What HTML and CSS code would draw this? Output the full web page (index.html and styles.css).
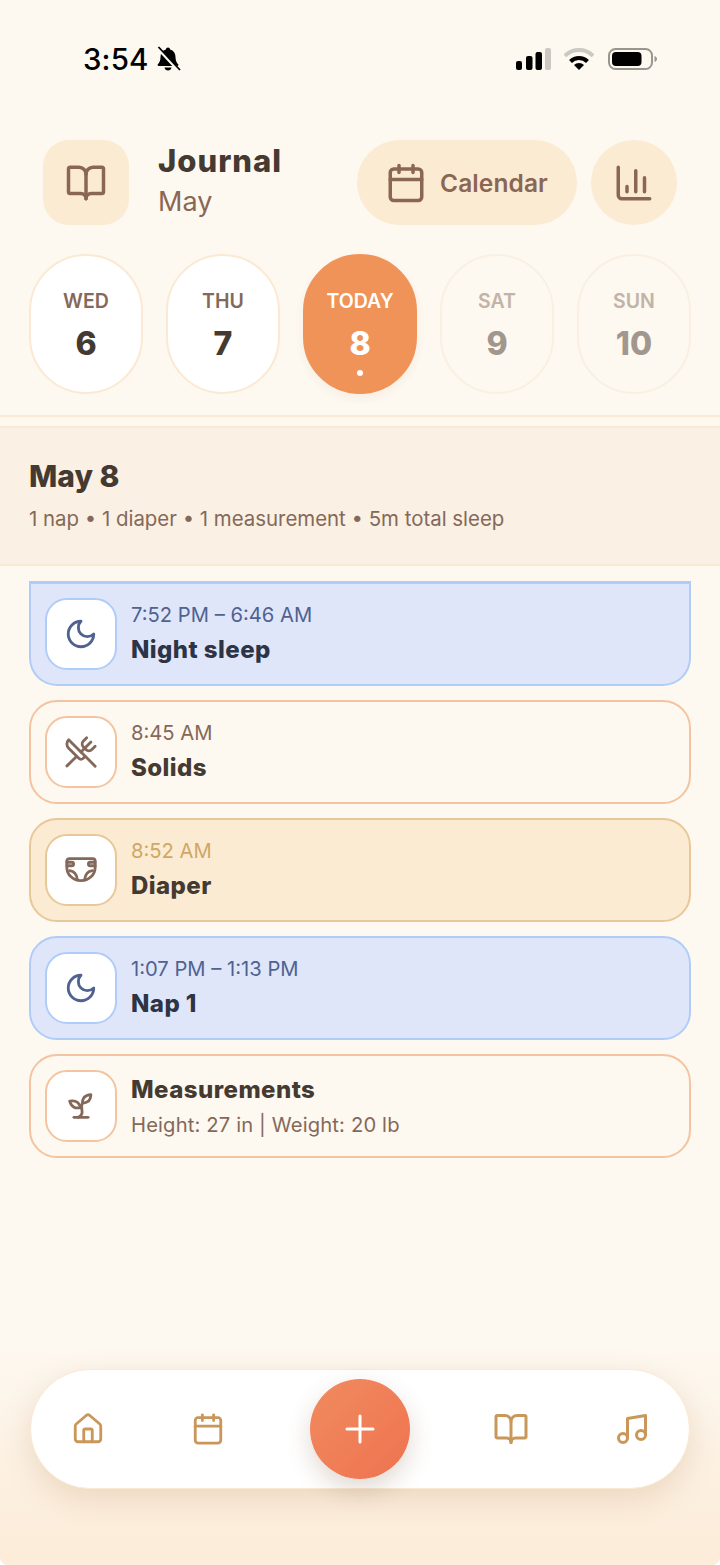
FILE: index.html
```html
<!DOCTYPE html>
<html lang="en">
<head>
<meta charset="utf-8">
<title>Journal</title>
<link rel="stylesheet" href="styles.css">
</head>
<body>
<div class="screen">
  <div class="status">
    <div class="status-left">
      <span class="clock">3:54</span>
      <svg class="bell" viewBox="0 0 26 26"><path d="M13 1.500c1.200 0 2 .9 2.100 1.900 3.600 1 5.400 4 5.400 7.600 0 3.500 1 5.500 2.700 7.300.5.700.1 1.700-.9 1.700H3.700c-1 0-1.400-1-.9-1.700 1.700-1.800 2.700-3.800 2.700-7.300 0-3.600 1.800-6.600 5.400-7.600.1-1 .9-1.900 2.100-1.900z"/><path d="M9.500 21.500h7c-.3 1.800-1.700 3-3.500 3s-3.200-1.200-3.500-3z"/><path class="bell-gap" d="M2 1.500 24 25"/><path class="bell-line" d="M3.500 1 25 24"/></svg>
    </div>
    <div class="status-right">
      <svg class="signal" viewBox="0 0 35 22"><rect x="0" y="13" width="6" height="9" rx="2"/><rect x="10" y="8" width="6.500" height="14" rx="2"/><rect x="19.500" y="4" width="6.500" height="18" rx="2"/><rect class="dim" x="29" y="0" width="6" height="22" rx="2"/></svg>
      <svg class="wifi" viewBox="0 0 30 22"><path class="arc arc-dim" d="M.9 7.900A20 20 0 0 1 29.100 7.900"/><path class="arc" d="M6.500 13.500A12 12 0 0 1 23.500 13.500"/><path d="M10 17A7 7 0 0 1 20 17L15 22z"/></svg>
      <svg class="battery" viewBox="0 0 49 22"><rect class="batt-shell" x="1" y="1" width="43" height="20" rx="6.500"/><rect x="4" y="4" width="29.500" height="14" rx="4"/><path class="batt-cap" d="M46.500 8c1.600.6 2.500 1.700 2.500 3s-.9 2.400-2.500 3z"/></svg>
    </div>
  </div>

  <header class="top">
    <div class="logo">
      <svg class="ico-42 brown" viewBox="0 0 24 24"><path d="M12 7v14"/><path d="M3 18a1 1 0 0 1-1-1V4a1 1 0 0 1 1-1h5a4 4 0 0 1 4 4 4 4 0 0 1 4-4h5a1 1 0 0 1 1 1v13a1 1 0 0 1-1 1h-6a3 3 0 0 0-3 3 3 3 0 0 0-3-3z"/></svg>
    </div>
    <div class="heading">
      <div class="heading-title">Journal</div>
      <div class="heading-sub">May</div>
    </div>
    <div class="cal-pill">
      <svg class="ico-42 brown" viewBox="0 0 24 24"><path d="M8 2v4M16 2v4"/><rect x="3" y="4" width="18" height="18" rx="2"/><path d="M3 10h18"/></svg>
      <span>Calendar</span>
    </div>
    <div class="stat-btn">
      <svg class="ico-42 brown" viewBox="0 0 24 24"><path d="M3 3v16a2 2 0 0 0 2 2h16"/><path d="M18 17V9M13 17V5M8 17v-3"/></svg>
    </div>
  </header>

  <nav class="days">
    <div class="day"><span class="day-name">WED</span><span class="day-num">6</span></div>
    <div class="day"><span class="day-name">THU</span><span class="day-num">7</span></div>
    <div class="day today"><span class="day-name">TODAY</span><span class="day-num">8</span><i class="dot"></i></div>
    <div class="day future"><span class="day-name">SAT</span><span class="day-num">9</span></div>
    <div class="day future"><span class="day-name">SUN</span><span class="day-num">10</span></div>
  </nav>

  <section class="summary">
    <h1>May 8</h1>
    <p>1 nap • 1 diaper • 1 measurement • 5m total sleep</p>
  </section>

  <main class="list">
    <article class="card sleep clipped">
      <div class="card-ico"><svg class="ico-34" viewBox="0 0 24 24"><path d="M12 3a6 6 0 0 0 9 9 9 9 0 1 1-9-9Z"/></svg></div>
      <div class="card-text"><div class="time">7:52 PM – 6:46 AM</div><div class="name">Night sleep</div></div>
    </article>
    <article class="card plain">
      <div class="card-ico"><svg class="ico-34" viewBox="0 0 24 24"><path d="m16 2-2.300 2.300a3 3 0 0 0 0 4.200l1.800 1.800a3 3 0 0 0 4.200 0L22 8"/><path d="M15 15 3.300 3.300a4.200 4.200 0 0 0 0 6l7.300 7.300c.7.700 2 .7 2.800 0L15 15Zm0 0 7 7"/><path d="m2.100 21.800 6.400-6.300"/><path d="m19 5-7 7"/></svg></div>
      <div class="card-text"><div class="time">8:45 AM</div><div class="name">Solids</div></div>
    </article>
    <article class="card diaper">
      <div class="card-ico"><svg class="ico-34" viewBox="0 0 24 24"><path d="M3.700 4h16.600A1.700 1.700 0 0 1 22 5.700V10c0 5.500-4.500 9.500-10 9.500S2 15.500 2 10V5.700A1.700 1.700 0 0 1 3.700 4z"/><path d="M2 6.500h3.500a1 1 0 0 1 0 2.500H2M22 6.500h-3.500a1 1 0 0 0 0 2.500H22M4 12.500c3 .3 5 2.500 5.500 6.500M20 12.500c-3 .3-5 2.500-5.500 6.500"/></svg></div>
      <div class="card-text"><div class="time">8:52 AM</div><div class="name">Diaper</div></div>
    </article>
    <article class="card sleep">
      <div class="card-ico"><svg class="ico-34" viewBox="0 0 24 24"><path d="M12 3a6 6 0 0 0 9 9 9 9 0 1 1-9-9Z"/></svg></div>
      <div class="card-text"><div class="time">1:07 PM – 1:13 PM</div><div class="name">Nap 1</div></div>
    </article>
    <article class="card plain">
      <div class="card-ico"><svg class="ico-34" viewBox="0 0 24 24"><path d="M7 20h10"/><path d="M10 20c5.500-2.500.8-6.400 3-10"/><path d="M9.500 9.400c1.100.8 1.800 2.200 2.300 3.700-2 .4-3.500.4-4.800-.3-1.200-.6-2.300-1.900-3-4.200 2.800-.5 4.400 0 5.500.8z"/><path d="M14.100 6a7 7 0 0 0-1.100 4c1.900-.1 3.300-.6 4.300-1.400 1-1 1.600-2.300 1.700-4.600-2.700.1-4 1-4.900 2z"/></svg></div>
      <div class="card-text measure"><div class="name first">Measurements</div><div class="time detail">Height: 27 in | Weight: 20 lb</div></div>
    </article>
  </main>

  <footer class="dock-wrap">
    <div class="dock">
      <svg class="ico-34 tan" viewBox="0 0 24 24"><path d="M15 21v-8a1 1 0 0 0-1-1h-4a1 1 0 0 0-1 1v8"/><path d="M3 10a2 2 0 0 1 .709-1.528l7-5.999a2 2 0 0 1 2.582 0l7 5.999A2 2 0 0 1 21 10v9a2 2 0 0 1-2 2H5a2 2 0 0 1-2-2z"/></svg>
      <svg class="ico-34 tan" viewBox="0 0 24 24"><path d="M8 2v4M16 2v4"/><rect x="3" y="4" width="18" height="18" rx="2"/><path d="M3 10h18"/></svg>
      <div class="fab"><svg class="plus" viewBox="0 0 32 32"><path d="M3 16h26M16 3v26"/></svg></div>
      <svg class="ico-36 tan" viewBox="0 0 24 24"><path d="M12 7v14"/><path d="M3 18a1 1 0 0 1-1-1V4a1 1 0 0 1 1-1h5a4 4 0 0 1 4 4 4 4 0 0 1 4-4h5a1 1 0 0 1 1 1v13a1 1 0 0 1-1 1h-6a3 3 0 0 0-3 3 3 3 0 0 0-3-3z"/></svg>
      <svg class="ico-36 tan" viewBox="0 0 24 24"><path d="M9 18V5l12-2v13"/><circle cx="6" cy="18" r="3"/><circle cx="18" cy="16" r="3"/></svg>
    </div>
  </footer>
</div>
</body>
</html>
```
FILE: styles.css
```css
* { box-sizing: border-box; }
html, body { margin: 0; padding: 0; background: #fff; }
body { font-family: "Inter", "Noto Sans", sans-serif; }
.screen {
  width: 720px; height: 1565px; display: flex; flex-direction: column;
  background: #fdf8f0; border-radius: 0 0 8px 8px; overflow: hidden;
}
svg { display: block; flex: none; }

.status { height: 140px; padding: 41px 63px 0 83px; display: flex; justify-content: space-between; align-items: flex-start; }
.status-left { display: flex; align-items: center; gap: 7px; height: 36px; }
.clock { font: 500 29.500px/36px "Inter", sans-serif; color: #000; letter-spacing: .1px; }
.bell { width: 26px; height: 26px; }
.bell path { fill: #000; }
.bell .bell-gap { fill: none; stroke: #fdf8f0; stroke-width: 3; }
.bell .bell-line { fill: none; stroke: #000; stroke-width: 1.800; }
.status-right { display: flex; align-items: center; gap: 13px; height: 36px; }
.signal { width: 35px; height: 22px; fill: #000; }
.wifi { width: 30px; height: 22px; fill: #000; }
.arc { fill: none; stroke: #000; stroke-width: 4; }
.arc-dim { stroke: #ccc8c2; }
.dim { fill: #ccc8c2; }
.battery { width: 49px; height: 22px; fill: #000; margin-left: 1px; }
.batt-shell { fill: none; stroke: #99958f; stroke-width: 2; }
.batt-cap { fill: #99958f; }

.ico-42, .ico-36, .ico-34 { fill: none; stroke-width: 2; stroke-linecap: round; stroke-linejoin: round; }
.ico-42 { width: 42px; height: 42px; }
.ico-36 { width: 36px; height: 36px; }
.ico-34 { width: 34px; height: 34px; }
.brown { stroke: #8a6753; }
.tan { stroke: #c99759; }

.top { height: 85px; margin: 0 43px; display: flex; align-items: center; }
.logo { width: 86px; height: 85px; border-radius: 26px; background: #fcebd3; display: flex; align-items: center; justify-content: center; }
.heading { margin-left: 29px; flex: 1; }
.heading-title { font: 800 31px/38px "Inter", sans-serif; color: #443a31; margin-top: -3px; letter-spacing: 1px; }
.heading-sub { font-size: 27px; line-height: 38px; color: #8a6753; margin-top: 3px; }
.cal-pill { width: 220px; height: 85px; border-radius: 43px; background: #fcebd3; display: flex; align-items: center; gap: 13px; padding-left: 28px; font: 600 24.500px/32px "Inter", sans-serif; color: #8a6753; letter-spacing: .1px; }
.stat-btn { width: 86px; height: 85px; border-radius: 50%; background: #fcebd3; margin-left: 14px; display: flex; align-items: center; justify-content: center; }

.days { margin-top: 29px; padding: 0 29px; display: flex; justify-content: space-between; }
.day { width: 114px; height: 140px; border-radius: 57px; background: #fff; border: 2px solid #fbe9d3; display: flex; flex-direction: column; align-items: center; padding-top: 31px; position: relative; }
.day-name { font: 600 19.500px/28px "Inter", sans-serif; color: #84695a; }
.day-num { font: 800 32px/40px "Inter", sans-serif; color: #443a31; margin-top: 9px; }
.today { background: #f09358; border-color: #f09358; box-shadow: 0 4px 10px rgba(120,80,40,.06); }
.today .day-name, .today .day-num { color: #fff; }
.dot { position: absolute; left: 50%; bottom: 16px; width: 6px; height: 6px; margin-left: -3px; border-radius: 50%; background: #fff; }
.future { background: transparent; border-color: #faf0e2; }
.future .day-name { color: #c3b2a6; }
.future .day-num { color: #a2978e; }

.summary { margin-top: 21px; border-top: 2px solid #fbe9d3; padding-top: 9px; }
.summary h1, .summary p { margin: 0; background: #faf0e4; padding-left: 29px; }
.summary h1 { border-top: 2px solid #fbe9d3; padding-top: 28px; font: 800 30px/40px "Inter", sans-serif; color: #443a31; }
.summary p { padding-top: 7px; padding-bottom: 29px; font-size: 20.400px; line-height: 32px; color: #84695a; border-bottom: 2px solid #fbe9d3; }

.list { flex: 1; padding: 15px 29px 0; display: flex; flex-direction: column; gap: 14px; }
.card { height: 104px; border-radius: 28px; border: 2px solid; display: flex; align-items: center; padding-left: 14px; gap: 14px; }
.clipped { border-radius: 0 0 28px 28px; border-top-width: 3px; height: 105px; }
.card-ico { width: 72px; height: 72px; border-radius: 22px; background: #fff; border: 2px solid; display: flex; align-items: center; justify-content: center; }
.card-text { padding-bottom: 2px; }
.card-text.measure { padding-bottom: 0; }
.time { font-size: 20.200px; line-height: 30px; }
.name { font: 800 24px/34px "Inter", sans-serif; margin-top: 3px; letter-spacing: .45px; }
.name.first { margin-top: 0; }
.sleep { background: #e0e6fa; border-color: #b0ccf8; }
.sleep .card-ico { border-color: #b0ccf8; }
.sleep .ico-34 { stroke: #4f6290; }
.sleep .time { color: #4f6290; }
.sleep .name { color: #2d3445; }
.plain { border-color: #f4c4a0; }
.plain .card-ico { border-color: #f4c4a0; }
.plain .ico-34 { stroke: #84695a; }
.plain .time { color: #84695a; }
.plain .name { color: #443a31; }
.diaper { background: #fcebd3; border-color: #e8c898; }
.diaper .card-ico { border-color: #e8c898; }
.diaper .ico-34 { stroke: #84695a; }
.diaper .time { color: #cfa766; }
.diaper .name { color: #443a31; }
.detail { margin-top: 3px; letter-spacing: .15px; }

.dock-wrap { height: 215px; padding: 19px 30px 0; background: linear-gradient(180deg, #fdf8f0 0%, #fceedd 75%, #fcecd9 100%); }
.dock { height: 120px; border-radius: 60px; background: #fff; border: 1px solid #fbe9d3; box-shadow: 0 10px 30px rgba(170,120,70,.2); display: grid; grid-template-columns: 113px 127px 1fr 129px 114px; align-items: center; justify-items: center; }
.fab { width: 100px; height: 100px; margin-left: 3px; border-radius: 50%; background: linear-gradient(135deg, #f18b5f, #ee7350); box-shadow: 0 10px 24px rgba(120,80,50,.22); display: flex; align-items: center; justify-content: center; }
.plus { width: 32px; height: 32px; fill: none; stroke: #fff; stroke-width: 3; stroke-linecap: round; }
```
